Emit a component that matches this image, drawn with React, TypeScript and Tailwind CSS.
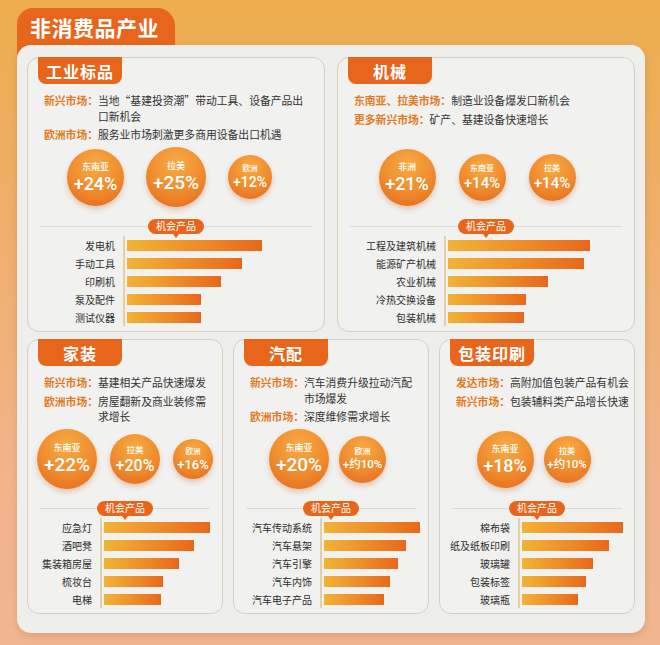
import React from 'react'

type Size = 'xl' | 'lg' | 'ml' | 'md' | 'sm' | 'xs'

const circleSizes: Record<Size, { box: string; label: string; pct: string; small: string }> = {
  xl: { box: 'w-[60px] h-[60px]', label: 'text-[9px]', pct: 'text-[19px]', small: 'text-[14px]' },
  lg: { box: 'w-[57px] h-[57px]', label: 'text-[9px]', pct: 'text-[18px]', small: 'text-[13px]' },
  ml: { box: 'w-[50px] h-[50px]', label: 'text-[8.5px]', pct: 'text-[16px]', small: 'text-[12px]' },
  md: { box: 'w-[47px] h-[47px]', label: 'text-[8px]', pct: 'text-[15px]', small: 'text-[11.5px]' },
  sm: { box: 'w-[44px] h-[44px]', label: 'text-[7.5px]', pct: 'text-[14px]', small: 'text-[11px]' },
  xs: { box: 'w-[40px] h-[40px]', label: 'text-[7.5px]', pct: 'text-[13px]', small: 'text-[10px]' },
}

type Circle = { name: string; pct: string; size: Size; approx?: boolean }

type CardData = {
  title: string
  lines: { label: string; text: string[] }[]
  circles: Circle[]
  circleRow: string
  labelW: string
  bars: { name: string; w: number }[]
}

const cards: CardData[] = [
  {
    title: '工业标品',
    lines: [
      { label: '新兴市场：', text: ['当地“基建投资潮”带动工具、设备产品出', '口新机会'] },
      { label: '欧洲市场：', text: ['服务业市场刺激更多商用设备出口机遇'] },
    ],
    circles: [
      { name: '东南亚', pct: '+24%', size: 'lg' },
      { name: '拉美', pct: '+25%', size: 'xl' },
      { name: '欧洲', pct: '+12%', size: 'sm' },
    ],
    circleRow: 'gap-[22px] pr-[13px]',
    labelW: 'w-[87px]',
    bars: [
      { name: '发电机', w: 135 },
      { name: '手动工具', w: 115 },
      { name: '印刷机', w: 94 },
      { name: '泵及配件', w: 74 },
      { name: '测试仪器', w: 74 },
    ],
  },
  {
    title: '机械',
    lines: [
      { label: '东南亚、拉美市场：', text: ['制造业设备爆发口新机会'] },
      { label: '更多新兴市场：', text: ['矿产、基建设备快速增长'] },
    ],
    circles: [
      { name: '非洲', pct: '+21%', size: 'lg' },
      { name: '东南亚', pct: '+14%', size: 'md' },
      { name: '拉美', pct: '+14%', size: 'md' },
    ],
    circleRow: 'gap-[23px] pr-[18px]',
    labelW: 'w-[98px]',
    bars: [
      { name: '工程及建筑机械', w: 142 },
      { name: '能源矿产机械', w: 136 },
      { name: '农业机械', w: 100 },
      { name: '冷热交换设备', w: 78 },
      { name: '包装机械', w: 76 },
    ],
  },
  {
    title: '家装',
    lines: [
      { label: '新兴市场：', text: ['基建相关产品快速爆发'] },
      { label: '欧洲市场：', text: ['房屋翻新及商业装修需', '求增长'] },
    ],
    circles: [
      { name: '东南亚', pct: '+22%', size: 'xl' },
      { name: '拉美', pct: '+20%', size: 'ml' },
      { name: '欧洲', pct: '+16%', size: 'xs' },
    ],
    circleRow: 'gap-[13px]',
    labelW: 'w-[64px]',
    bars: [
      { name: '应急灯', w: 106 },
      { name: '酒吧凳', w: 90 },
      { name: '集装箱房屋', w: 75 },
      { name: '梳妆台', w: 59 },
      { name: '电梯', w: 57 },
    ],
  },
  {
    title: '汽配',
    lines: [
      { label: '新兴市场：', text: ['汽车消费升级拉动汽配', '市场爆发'] },
      { label: '欧洲市场：', text: ['深度维修需求增长'] },
    ],
    circles: [
      { name: '东南亚', pct: '+20%', size: 'xl' },
      { name: '欧洲', pct: '+约10%', size: 'md', approx: true },
    ],
    circleRow: 'gap-[10px] pr-[7px]',
    labelW: 'w-[78px]',
    bars: [
      { name: '汽车传动系统', w: 96 },
      { name: '汽车悬架', w: 82 },
      { name: '汽车引擎', w: 74 },
      { name: '汽车内饰', w: 66 },
      { name: '汽车电子产品', w: 60 },
    ],
  },
  {
    title: '包装印刷',
    lines: [
      { label: '发达市场：', text: ['高附加值包装产品有机会'] },
      { label: '新兴市场：', text: ['包装辅料类产品增长快速'] },
    ],
    circles: [
      { name: '东南亚', pct: '+18%', size: 'lg' },
      { name: '拉美', pct: '+约10%', size: 'md', approx: true },
    ],
    circleRow: 'gap-[10px] pr-[7px]',
    labelW: 'w-[70px]',
    bars: [
      { name: '棉布袋', w: 101 },
      { name: '纸及纸板印刷', w: 87 },
      { name: '玻璃罐', w: 71 },
      { name: '包装标签', w: 64 },
      { name: '玻璃瓶', w: 56 },
    ],
  },
]

function Bubble({ c }: { c: Circle }) {
  const s = circleSizes[c.size]
  return (
    <div
      className={`${s.box} flex shrink-0 flex-col items-center justify-center rounded-full bg-[radial-gradient(circle_at_50%_28%,#f7ab45_0%,#ef8a2d_55%,#e5651b_100%)] text-white shadow-[0_3px_5px_rgba(190,90,20,0.28)]`}
    >
      <span className={`${s.label} block font-medium leading-[1.45]`}>{c.name}</span>
      <span
        className={`${c.approx ? `${s.small} leading-[1.45]` : `${s.pct} leading-[1.2]`} block font-['Roboto','Noto_Sans_CJK_SC',sans-serif] font-medium`}
      >
        {c.pct}
      </span>
    </div>
  )
}

function Card({ data }: { data: CardData }) {
  return (
    <div className="flex flex-col rounded-[12px] border border-[#dacfbc] bg-[#f1f1ef]">
      <div className="-mt-px ml-[10px] flex h-[27px] w-[84px] items-center justify-center rounded-b-[8px] bg-[#e8661c] text-[16px] font-bold tracking-[1px] text-white">
        {data.title}
      </div>

      <div className="mt-[9px] flex h-[51px] flex-col gap-[3px] pl-[16px] text-[10.8px] leading-[15.7px]">
        {data.lines.map((l) => (
          <div key={l.label} className="flex">
            <span className="shrink-0 font-bold text-[#e47a24]">{l.label}</span>
            <div className="whitespace-nowrap text-[#333333]">
              {l.text.map((t) => (
                <div key={t}>{t}</div>
              ))}
            </div>
          </div>
        ))}
      </div>

      <div className={`flex h-[66px] items-center justify-center ${data.circleRow}`}>
        {data.circles.map((c) => (
          <Bubble key={c.name} c={c} />
        ))}
      </div>

      <div className="relative mt-[8px] flex h-[16px] items-center justify-center">
        <div className="absolute inset-x-[12px] top-1/2 h-px bg-[#dadad6]" />
        <div className="relative flex h-[15px] items-center rounded-full bg-[#e8661c] px-[8px] text-[10px] leading-none text-white">
          机会产品
          <span className="absolute left-1/2 top-full -translate-x-1/2 border-x-[3px] border-t-[4px] border-x-transparent border-t-[#e8661c]" />
        </div>
      </div>

      <div className="mt-[2px] flex pb-[5px]">
        <div className={`${data.labelW} flex flex-col`}>
          {data.bars.map((b) => (
            <div key={b.name} className="flex h-[18px] items-center justify-end whitespace-nowrap text-[10px] text-[#2c2c2c]">
              {b.name}
            </div>
          ))}
        </div>
        <div className="ml-[8px] w-[1.5px] bg-[#e4d0a8]" />
        <div className="ml-[2px] flex flex-col">
          {data.bars.map((b) => (
            <div key={b.name} className="flex h-[18px] items-center">
              <div
                className="h-[11px] bg-linear-to-r from-[#f1b337] to-[#e8671b]"
                style={{ width: b.w }}
              />
            </div>
          ))}
        </div>
      </div>
    </div>
  )
}

export default function App() {
  return (
    <div className="h-[645px] w-[660px] overflow-hidden bg-[linear-gradient(180deg,#edad4d_0%,#efb070_40%,#f1b48c_75%,#f1b690_100%)] pl-[17px] pr-[15px] pt-[8px] font-['Noto_Sans_CJK_SC',sans-serif]">
      <div className="flex h-[50px] w-[158px] items-start rounded-t-[16px] rounded-tr-[18px] bg-[#e8661c] pl-[13px] pt-[5px]">
        <span className="text-[21px] font-bold leading-[28px] tracking-[0.5px] text-white">非消费品产业</span>
      </div>

      <div className="relative -mt-[13px] rounded-[14px] bg-[#eeeeec] px-[10px] pb-[19px] pt-[12px] shadow-[0_3px_6px_rgba(160,90,40,0.25)]">
        <div className="grid grid-cols-2 gap-[12px]">
          <Card data={cards[0]} />
          <Card data={cards[1]} />
        </div>
        <div className="mt-[7px] grid grid-cols-3 gap-[10px]">
          <Card data={cards[2]} />
          <Card data={cards[3]} />
          <Card data={cards[4]} />
        </div>
      </div>
    </div>
  )
}
